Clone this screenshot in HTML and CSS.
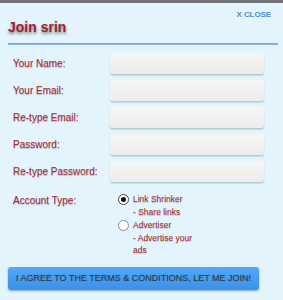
FILE: index.html
```html
<!DOCTYPE html>
<html>
<head>
<meta charset="utf-8">
<link rel="stylesheet" href="styles.css">
</head>
<body>
<div class="modal">
  <div class="header">
    <a class="close">X CLOSE</a>
    <h1 class="title">Join srin</h1>
  </div>
  <div class="rule"></div>
  <form class="form">
    <div class="row"><label class="label">Your Name:</label><div class="input"></div></div>
    <div class="row"><label class="label">Your Email:</label><div class="input"></div></div>
    <div class="row"><label class="label">Re-type Email:</label><div class="input"></div></div>
    <div class="row"><label class="label">Password:</label><div class="input"></div></div>
    <div class="row"><label class="label">Re-type Password:</label><div class="input"></div></div>
    <div class="row account">
      <label class="label">Account Type:</label>
      <div class="options">
        <div class="option">
          <span class="radio checked"></span>
          <div class="opt-text">Link Shrinker<br>- Share links</div>
        </div>
        <div class="option">
          <span class="radio"></span>
          <div class="opt-text">Advertiser<br>- Advertise your<br>ads</div>
        </div>
      </div>
    </div>
    <div class="btn">I AGREE TO THE TERMS &amp; CONDITIONS, LET ME JOIN!</div>
  </form>
</div>
</body>
</html>
```

FILE: styles.css
```css
html, body {
  margin: 0;
  padding: 0;
}
body {
  background: #e2f3fc;
  font-family: "Liberation Sans", Arial, sans-serif;
  width: 283px;
  height: 300px;
  overflow: hidden;
}
.modal {
  border-top: 3px solid #707478;
  height: 297px;
  background: #e3f4fd;
}
.header {
  display: flex;
  flex-direction: column;
  padding: 7px 12px 0 8px;
}
.close {
  align-self: flex-end;
  font-size: 8px;
  line-height: 9px;
  font-weight: bold;
  color: #4b8fd2;
  letter-spacing: -0.1px;
}
.title {
  margin: 0;
  font-size: 14px;
  line-height: 16px;
  font-weight: bold;
  color: #a4202b;
  text-shadow: 0 2px 3px rgba(40, 40, 40, 0.6);
}
.rule {
  margin: 8px 5px 0 8px;
  height: 2px;
  background: linear-gradient(#6ea6d6, #8dbbe2);
}
.form {
  display: flex;
  flex-direction: column;
  padding: 8px 0 0 13px;
  margin: 0;
}
.row {
  display: flex;
  align-items: center;
  height: 21px;
  margin-bottom: 6px;
}
.label {
  width: 97px;
  font-size: 10px;
  color: #a82830;
  text-shadow: 0 1px 1px rgba(80, 40, 40, 0.35);
}
.input {
  width: 154px;
  height: 21px;
  border-radius: 3px;
  background: linear-gradient(#f6f6f6, #ececec);
  box-shadow: 0 1px 1px #b8c8d2, 0 2px 1px rgba(170, 200, 220, 0.5);
}
.account {
  height: auto;
  align-items: flex-start;
  margin-top: 6px;
  margin-bottom: 0;
}
.account .label {
  padding-top: 1px;
}
.options {
  display: flex;
  flex-direction: column;
  gap: 2px;
  padding-left: 8px;
}
.option {
  display: flex;
  align-items: flex-start;
}
.radio {
  width: 9px;
  height: 9px;
  border-radius: 50%;
  border: 1px solid #8a8a8a;
  background: #fff;
  margin-right: 4px;
  position: relative;
  flex-shrink: 0;
}
.radio.checked {
  border-color: #444;
}
.radio.checked::after {
  content: "";
  position: absolute;
  left: 2px;
  top: 2px;
  width: 5px;
  height: 5px;
  border-radius: 50%;
  background: #111;
}
.opt-text {
  font-size: 8.5px;
  line-height: 12.5px;
  color: #a82830;
  text-shadow: 0 1px 1px rgba(80, 40, 40, 0.3);
  margin-top: -1px;
}
.btn {
  margin: 10px 0 0 -5px;
  width: 251px;
  height: 23px;
  box-sizing: border-box;
  border-radius: 3px;
  background: linear-gradient(#52a9f7, #3b90ea);
  box-shadow: 0 1px 2px rgba(40, 80, 130, 0.5);
  color: #2e3b45;
  font-size: 9px;
  line-height: 23px;
  text-align: center;
  text-shadow: 0 0 1px rgba(40, 50, 60, 0.4);
}
```
